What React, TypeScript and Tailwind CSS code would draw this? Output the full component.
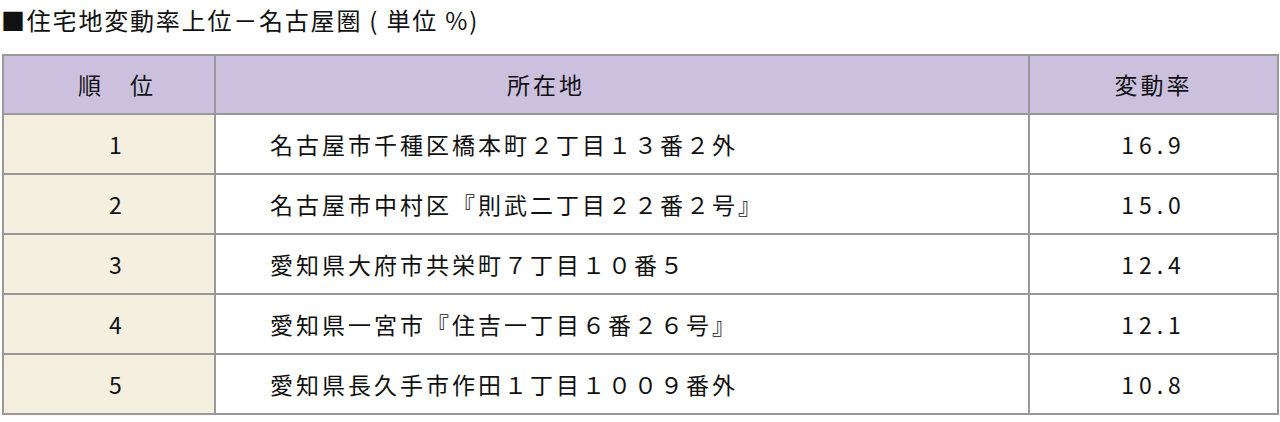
const ROWS = [
  { rank: "1", place: "名古屋市千種区橋本町２丁目１３番２外", rate: "16.9" },
  { rank: "2", place: "名古屋市中村区『則武二丁目２２番２号』", rate: "15.0" },
  { rank: "3", place: "愛知県大府市共栄町７丁目１０番５", rate: "12.4" },
  { rank: "4", place: "愛知県一宮市『住吉一丁目６番２６号』", rate: "12.1" },
  { rank: "5", place: "愛知県長久手市作田１丁目１００９番外", rate: "10.8" },
];

export default function App() {
  return (
    <div className="w-[1280px] h-[422px] bg-white text-[#111] font-['Noto_Sans_CJK_JP','Noto_Sans',sans-serif]">
      <h1 className="pl-[1px] pt-[4px] text-[24px] leading-[32px] font-normal tracking-[1.8px]">
        ■住宅地変動率上位－名古屋圏 ( 単位 %)
      </h1>
      <table className="mt-[18px] ml-[2px] w-[1277px] border-collapse border-2 border-[#999] text-[23px] tracking-[3px]">
        <thead>
          <tr className="h-[59px] bg-[#cbc1df]">
            <th className="w-[212px] border-2 border-[#999] pl-[16px] font-normal">順　位</th>
            <th className="border-2 border-[#999] pr-[152px] font-normal">所在地</th>
            <th className="w-[249px] border-2 border-[#999] font-normal">変動率</th>
          </tr>
        </thead>
        <tbody>
          {ROWS.map((r) => (
            <tr key={r.rank} className="h-[60px]">
              <td className="border-2 border-[#999] bg-[#f5efe0] pl-[16px] text-center">{r.rank}</td>
              <td className="border-2 border-[#999] pl-[54px] bg-white">{r.place}</td>
              <td className="border-2 border-[#999] text-center bg-white tracking-[5px]">{r.rate}</td>
            </tr>
          ))}
        </tbody>
      </table>
    </div>
  );
}
